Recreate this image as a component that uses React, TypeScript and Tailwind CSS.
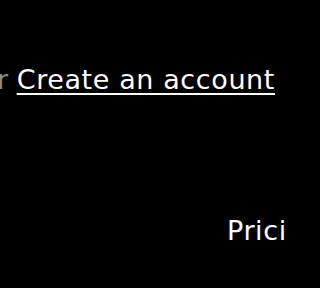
import React from 'react';

export default function App() {
  return (
    <div className="w-screen h-screen bg-black">
      <div
        className="w-[288px] h-[288px] bg-black overflow-hidden text-white"
        style={{ fontFamily: '"DejaVu Sans", sans-serif' }}
      >
        <div className="pt-[60px] flex items-baseline justify-end whitespace-nowrap w-[275px] text-[27px] tracking-[0.6px]">
          <span className="text-[#8a8a8a] mr-[8px]">Sign in or</span>
          <a href="#" className="underline underline-offset-[4px] decoration-[2px]">
            Create an account
          </a>
        </div>
        <div className="pt-[110px] pl-[227px] whitespace-nowrap text-[27px] tracking-[0.6px]">
          <span>Pricing</span>
        </div>
      </div>
    </div>
  );
}
